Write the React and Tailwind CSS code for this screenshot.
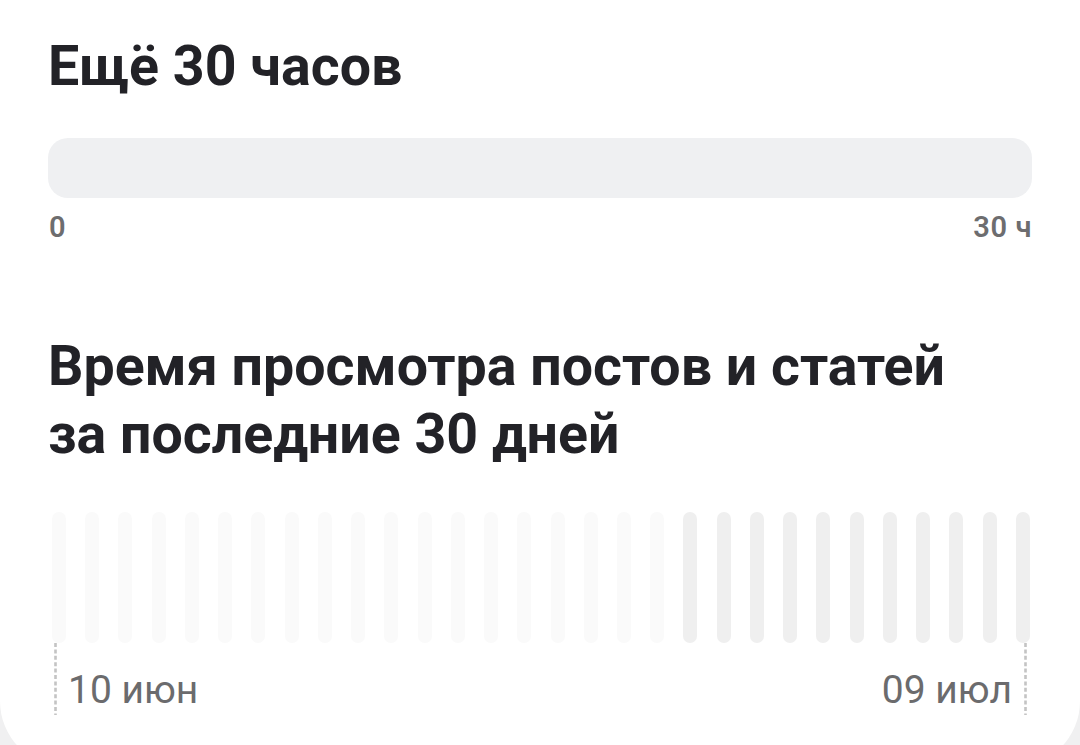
const DAYS = 30;
const ACTIVE_FROM = 19;

function DashedTick() {
  return (
    <svg width="3" height="72" className="shrink-0">
      <line x1="1.5" y1="0" x2="1.5" y2="72" stroke="#c4c4c4" strokeWidth="2.6" strokeDasharray="4 2.4" />
    </svg>
  );
}

export default function App() {
  return (
    <div className="h-[745px] overflow-hidden bg-[#f0f0f1] font-['Roboto',sans-serif]">
      <div className="rounded-b-[66px] bg-white px-[48px] pb-[52px] pt-[31px]">
        <h1 className="text-[55.5px] font-bold leading-[72px] text-[#222227]">Ещё 30 часов</h1>

        <div className="mt-[35px] h-[60px] rounded-[20px] bg-[#eff0f2]" />
        <div className="mt-[15px] flex justify-between text-[29px] font-semibold leading-[28px] tracking-[0.6px] text-[#6d6d6f]">
          <span className="pl-[1px]">0</span>
          <span>30 ч</span>
        </div>

        <h2 className="mt-[92px] text-[55.5px] font-bold leading-[68px] text-[#222227]">
          Время просмотра постов и статей
          <br />
          за последние 30 дней
        </h2>

        {/* daily bars, last days highlighted */}
        <div className="mt-[43px] flex h-[131px] justify-between pl-[4px] pr-[2px]">
          {Array.from({ length: DAYS }, (_, i) => (
            <div
              key={i}
              className={
                i >= ACTIVE_FROM
                  ? "w-[14px] rounded-[7px] bg-[#efefef]"
                  : "w-[14px] rounded-[7px] bg-[#fafafa]"
              }
            />
          ))}
        </div>

        <div className="flex items-start justify-between pl-[6px] pr-[5px]">
          <div className="flex items-start gap-[11px]">
            <DashedTick />
            <span className="mt-[28px] text-[39px] leading-[38px] text-[#6b6b6d]">10 июн</span>
          </div>
          <div className="flex items-start gap-[12px]">
            <span className="mt-[28px] text-[39px] leading-[38px] text-[#6b6b6d]">09 июл</span>
            <DashedTick />
          </div>
        </div>
      </div>
    </div>
  );
}
